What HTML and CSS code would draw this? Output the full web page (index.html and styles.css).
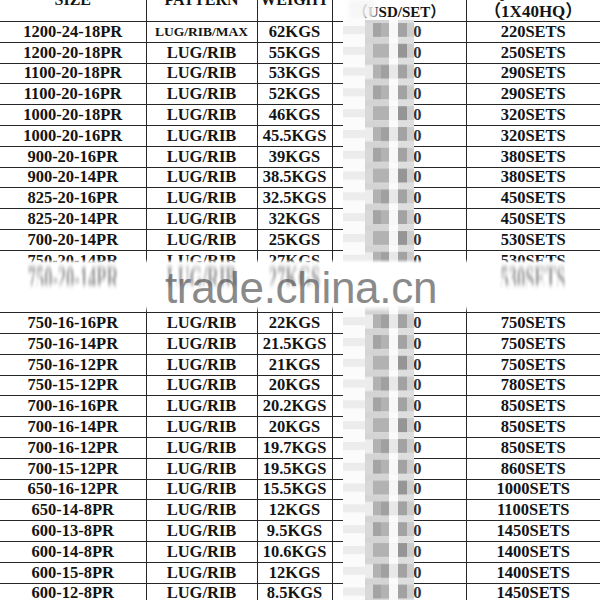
FILE: index.html
```html
<!DOCTYPE html>
<html>
<head>
<meta charset="utf-8">
<link rel="stylesheet" href="styles.css">
</head>
<body>
<div class="sheet">
  <table class="spec">
    <colgroup>
      <col class="c-size"><col class="c-pat"><col class="c-wt"><col class="c-price"><col class="c-qty">
    </colgroup>
    <thead>
      <tr class="head">
        <th>SIZE</th>
        <th>PATTERN</th>
        <th>WEIGHT</th>
        <th class="two"><div class="l1">FOB PRICE</div><div class="l2">（USD/SET）</div></th>
        <th class="two"><div class="l1">QUANTITY</div><div class="l2 big">（1X40HQ）</div></th>
      </tr>
    </thead>
    <tbody>
      <tr><td>1200-24-18PR</td><td class="small">LUG/RIB/MAX</td><td>62KGS</td><td class="price">0</td><td>220SETS</td></tr>
      <tr><td>1200-20-18PR</td><td>LUG/RIB</td><td>55KGS</td><td class="price">0</td><td>250SETS</td></tr>
      <tr><td>1100-20-18PR</td><td>LUG/RIB</td><td>53KGS</td><td class="price">0</td><td>290SETS</td></tr>
      <tr><td>1100-20-16PR</td><td>LUG/RIB</td><td>52KGS</td><td class="price">0</td><td>290SETS</td></tr>
      <tr><td>1000-20-18PR</td><td>LUG/RIB</td><td>46KGS</td><td class="price">0</td><td>320SETS</td></tr>
      <tr><td>1000-20-16PR</td><td>LUG/RIB</td><td>45.5KGS</td><td class="price">0</td><td>320SETS</td></tr>
      <tr><td>900-20-16PR</td><td>LUG/RIB</td><td>39KGS</td><td class="price">0</td><td>380SETS</td></tr>
      <tr><td>900-20-14PR</td><td>LUG/RIB</td><td>38.5KGS</td><td class="price">0</td><td>380SETS</td></tr>
      <tr><td>825-20-16PR</td><td>LUG/RIB</td><td>32.5KGS</td><td class="price">0</td><td>450SETS</td></tr>
      <tr><td>825-20-14PR</td><td>LUG/RIB</td><td>32KGS</td><td class="price">0</td><td>450SETS</td></tr>
      <tr><td>700-20-14PR</td><td>LUG/RIB</td><td>25KGS</td><td class="price">0</td><td>530SETS</td></tr>
      <tr><td>750-20-14PR</td><td>LUG/RIB</td><td>27KGS</td><td class="price">0</td><td>530SETS</td></tr>
      <tr class="hid"><td>750-20-12PR</td><td>LUG/RIB</td><td>26KGS</td><td class="price">0</td><td>550SETS</td></tr>
      <tr class="hid"><td>750-16-18PR</td><td>LUG/RIB</td><td>23KGS</td><td class="price">00</td><td>730SETS</td></tr>
      <tr><td>750-16-16PR</td><td>LUG/RIB</td><td>22KGS</td><td class="price">00</td><td>750SETS</td></tr>
      <tr><td>750-16-14PR</td><td>LUG/RIB</td><td>21.5KGS</td><td class="price">00</td><td>750SETS</td></tr>
      <tr><td>750-16-12PR</td><td>LUG/RIB</td><td>21KGS</td><td class="price">00</td><td>750SETS</td></tr>
      <tr><td>750-15-12PR</td><td>LUG/RIB</td><td>20KGS</td><td class="price">00</td><td>780SETS</td></tr>
      <tr><td>700-16-16PR</td><td>LUG/RIB</td><td>20.2KGS</td><td class="price">00</td><td>850SETS</td></tr>
      <tr><td>700-16-14PR</td><td>LUG/RIB</td><td>20KGS</td><td class="price">00</td><td>850SETS</td></tr>
      <tr><td>700-16-12PR</td><td>LUG/RIB</td><td>19.7KGS</td><td class="price">00</td><td>850SETS</td></tr>
      <tr><td>700-15-12PR</td><td>LUG/RIB</td><td>19.5KGS</td><td class="price">00</td><td>860SETS</td></tr>
      <tr><td>650-16-12PR</td><td>LUG/RIB</td><td>15.5KGS</td><td class="price">00</td><td>1000SETS</td></tr>
      <tr><td>650-14-8PR</td><td>LUG/RIB</td><td>12KGS</td><td class="price">0</td><td>1100SETS</td></tr>
      <tr><td>600-13-8PR</td><td>LUG/RIB</td><td>9.5KGS</td><td class="price">00</td><td>1450SETS</td></tr>
      <tr><td>600-14-8PR</td><td>LUG/RIB</td><td>10.6KGS</td><td class="price">00</td><td>1400SETS</td></tr>
      <tr><td>600-15-8PR</td><td>LUG/RIB</td><td>12KGS</td><td class="price">00</td><td>1400SETS</td></tr>
      <tr><td>600-12-8PR</td><td>LUG/RIB</td><td>8.5KGS</td><td class="price">0</td><td>1450SETS</td></tr>
    </tbody>
  </table>

  <div class="head-blur" aria-hidden="true"></div>

  <svg class="mosaic" width="71" height="581" viewBox="0 20 71 581" aria-hidden="true">
    <defs>
      <pattern id="mz" x="0" y="20" width="71" height="20.8" patternUnits="userSpaceOnUse">
        <rect width="71" height="20.8" fill="#fbfbfb"/>
        <rect x="0" y="6" width="22" height="8" fill="#ececec"/>
        <rect x="22" y="3" width="8" height="14" fill="#d8d8d8"/>
        <rect x="30" y="3" width="16" height="14" fill="#b2b2b2"/>
        <rect x="46" y="3" width="9" height="14" fill="#e8e8e8"/>
        <rect x="55" y="3" width="9" height="14" fill="#a2a2a2"/>
        <rect x="64" y="3" width="7" height="14" fill="#cdcdcd"/>
        <rect x="22" y="17" width="24" height="3.8" fill="#d4d4d4"/>
        <rect x="22" y="0" width="24" height="3" fill="#d4d4d4"/>
        <rect x="55" y="17" width="16" height="3.8" fill="#dedede"/>
        <rect x="55" y="0" width="16" height="3" fill="#dedede"/>
      </pattern>
      <pattern id="mz2" x="0" y="20" width="71" height="62.4" patternUnits="userSpaceOnUse">
        <rect x="30" y="3" width="8" height="14" fill="#000" opacity="0.08"/>
        <rect x="46" y="24" width="9" height="14" fill="#fff" opacity="0.6"/>
        <rect x="38" y="45" width="8" height="14" fill="#000" opacity="0.1"/>
        <rect x="55" y="24" width="9" height="14" fill="#000" opacity="0.08"/>
        <rect x="22" y="45" width="8" height="14" fill="#fff" opacity="0.5"/>
        <rect x="46" y="3" width="9" height="14" fill="#fff" opacity="0.7"/>
      </pattern>
    </defs>
    <rect y="20" width="71" height="581" fill="url(#mz)"/>
    <rect y="20" width="71" height="581" fill="url(#mz2)"/>
  </svg>

  <div class="band" aria-hidden="true">
    <span class="smear s1">750-20-14PR</span>
    <span class="smear s2">LUG/RIB</span>
    <span class="smear s3">27KGS</span>
    <span class="smear s5">530SETS</span>
    <span class="mark">trade.china.cn</span>
  </div>
</div>
</body>
</html>
```
FILE: styles.css
```css
html, body {
  margin: 0;
  padding: 0;
  background: #fff;
}

.sheet {
  position: relative;
  width: 600px;
  height: 600px;
  overflow: hidden;
  background: #fff;
}

.spec {
  border-collapse: collapse;
  table-layout: fixed;
  width: 600px;
  margin-top: -23px;
  color: #141414;
  font-family: "Liberation Serif", "Times New Roman", serif;
  font-weight: bold;
  font-size: 16.5px;
}

.c-size { width: 146px; }
.c-pat { width: 111px; }
.c-wt { width: 75px; }
.c-price { width: 134px; }
.c-qty { width: 134px; }

.spec th,
.spec td {
  border: 1px solid #262626;
  padding: 0;
  text-align: center;
  line-height: 18px;
  white-space: nowrap;
  overflow: hidden;
}

.spec th:first-child,
.spec td:first-child { border-left: none; }
.spec th:last-child,
.spec td:last-child { border-right: none; }

.spec tbody tr { height: 20.8px; }

.spec tr.hid td { color: #fff; }

.head { height: 44px; }
.head th {
  font-size: 16px;
  vertical-align: middle;
}
.head th.two {
  vertical-align: bottom;
  font-size: 15px;
}
.head .l1 { line-height: 20px; }
.head .l2 {
  line-height: 16px;
  padding-bottom: 1px;
  font-family: "Liberation Serif", "Noto Sans CJK SC", serif;
}
.head .l2.big { font-size: 17px; }

.spec td.small { font-size: 13.5px; }

.spec td.price {
  text-align: right;
  padding-right: 44px;
  color: #333;
}

.head-blur {
  position: absolute;
  left: 349px;
  top: 0;
  width: 26px;
  height: 19px;
  background: rgba(244, 244, 244, 0.85);
  filter: blur(2px);
}

.mosaic {
  position: absolute;
  left: 343px;
  top: 20px;
  filter: blur(0.7px);
}

.band {
  position: absolute;
  left: 0;
  top: 259px;
  width: 600px;
  height: 53px;
  display: grid;
  grid-template-columns: 146px 111px 75px 134px 134px;
  grid-template-rows: 53px;
  background: linear-gradient(to bottom,
    rgba(255,255,255,0) 0px,
    #fff 4px,
    #fff 47px,
    rgba(255,255,255,0) 53px);
  font-family: "Liberation Serif", serif;
  font-weight: bold;
  font-size: 16.5px;
}

.smear {
  grid-row: 1;
  align-self: start;
  justify-self: center;
  height: 12px;
  overflow: hidden;
  line-height: 18px;
  margin-top: 1px;
  color: #555;
  transform: scaleY(2.1);
  transform-origin: top center;
  filter: blur(1.3px);
  opacity: 0.6;
}
.s1 { grid-column: 1; }
.s2 { grid-column: 2; }
.s3 { grid-column: 3; }
.s5 { grid-column: 5; }

.mark {
  grid-row: 1;
  grid-column: 1 / 6;
  justify-self: center;
  align-self: center;
  padding-top: 5px;
  padding-left: 2px;
  font-family: "Liberation Sans", Arial, sans-serif;
  font-weight: normal;
  font-size: 44px;
  line-height: 44px;
  color: #8a8a8a;
  letter-spacing: -0.3px;
}
```
